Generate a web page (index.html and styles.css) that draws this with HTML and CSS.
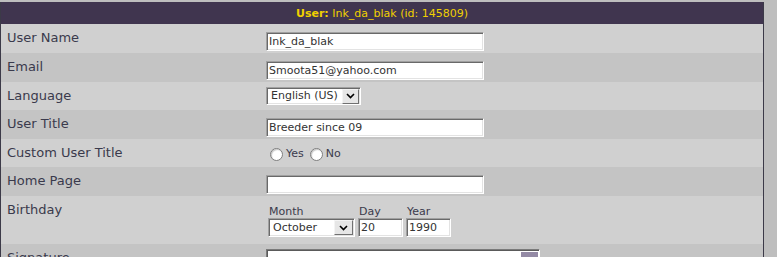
FILE: index.html
```html
<!DOCTYPE html>
<html>
<head>
<meta charset="utf-8">
<link rel="stylesheet" href="styles.css">
</head>
<body>
<div class="panel">
  <div class="head"><b>User:</b> Ink_da_blak (id: 145809)</div>

  <div class="row light h29">
    <div class="label">User Name</div>
    <div class="field"><input class="text wide" type="text" value="Ink_da_blak"></div>
  </div>

  <div class="row dark h29">
    <div class="label">Email</div>
    <div class="field"><input class="text wide" type="text" value="Smoota51@yahoo.com"></div>
  </div>

  <div class="row light h28">
    <div class="label">Language</div>
    <div class="field sel-field">
      <span class="select lang"><span class="sel-text">English (US)</span><span class="btn"><svg width="9" height="6" viewBox="0 0 9 6"><path d="M1 1 L4.5 4.5 L8 1" fill="none" stroke="#000" stroke-width="1.6"/></svg></span></span>
    </div>
  </div>

  <div class="row dark h29">
    <div class="label">User Title</div>
    <div class="field"><input class="text wide" type="text" value="Breeder since 09"></div>
  </div>

  <div class="row light h28">
    <div class="label">Custom User Title</div>
    <div class="field radios">
      <label class="radio"><span class="circle"></span>Yes</label>
      <label class="radio"><span class="circle"></span>No</label>
    </div>
  </div>

  <div class="row dark h29">
    <div class="label">Home Page</div>
    <div class="field"><input class="text wide" type="text" value=""></div>
  </div>

  <div class="row light h48">
    <div class="label">Birthday</div>
    <div class="field bday">
      <div class="part">
        <span class="small">Month</span>
        <span class="select month"><span class="sel-text">October</span><span class="btn"><svg width="9" height="6" viewBox="0 0 9 6"><path d="M1 1 L4.5 4.5 L8 1" fill="none" stroke="#000" stroke-width="1.6"/></svg></span></span>
      </div>
      <div class="part">
        <span class="small">Day</span>
        <input class="text day" type="text" value="20">
      </div>
      <div class="part">
        <span class="small">Year</span>
        <input class="text year" type="text" value="1990">
      </div>
    </div>
  </div>

  <div class="row dark last">
    <div class="label">Signature</div>
    <div class="field sig-field">
      <div class="textarea"><span class="sb"></span></div>
    </div>
  </div>
</div>
</body>
</html>
```

FILE: styles.css
```css
html, body {
  margin: 0;
  padding: 0;
  background: #bebebe;
  height: 257px;
  overflow: hidden;
}
body {
  padding-top: 2px;
  font-family: "DejaVu Sans", Verdana, sans-serif;
}
.panel {
  width: 762px;
  border-left: 1px solid #3c3a48;
  border-right: 1px solid #3c3a48;
  background: #d0d0d0;
}
.head {
  height: 22px;
  line-height: 23px;
  background: #40354f;
  color: #f0d000;
  font-size: 11px;
  text-align: center;
}
.head b { font-weight: bold; }

.row {
  display: grid;
  grid-template-columns: 265px 1fr;
  box-sizing: border-box;
}
.light { background: #d0d0d0; }
.dark { background: #c4c4c4; }
.h29 { height: 29px; }
.h28 { height: 28px; }
.h48 { height: 48px; }
.last { height: 40px; }

.label {
  padding: 6px 0 0 6px;
  font-size: 13px;
  line-height: 16px;
  color: #3a3a4c;
}
.field {
  padding-top: 6px;
}
.text {
  box-sizing: border-box;
  height: 19px;
  margin: 0;
  padding: 0 0 0 1px;
  font-family: "DejaVu Sans", Verdana, sans-serif;
  font-size: 11px;
  color: #333;
  background: #fff;
  border: 1px solid;
  border-color: #a0a0a0 #ffffff #ffffff #a0a0a0;
  box-shadow: inset 1px 1px 0 #696969, inset -1px -1px 0 #e3e3e3;
  outline: none;
  padding-left: 2px;
}
.wide { width: 218px; }

.sel-field { padding-top: 5px; }
.select {
  box-sizing: border-box;
  display: flex;
  align-items: center;
  height: 18px;
  background: #fff;
  border: 1px solid;
  border-color: #a0a0a0 #ffffff #ffffff #a0a0a0;
  box-shadow: inset 1px 1px 0 #696969, inset -1px -1px 0 #e3e3e3;
  font-size: 11px;
  color: #333;
  padding: 1px;
}
.lang { width: 95px; }
.sel-text {
  flex: 1;
  padding-left: 3px;
  white-space: nowrap;
  line-height: 14px;
}
.btn {
  box-sizing: border-box;
  width: 17px;
  height: 15px;
  display: flex;
  align-items: center;
  justify-content: center;
  background: #e6e6e6;
  border: 1px solid;
  border-color: #f4f4f4 #707070 #707070 #f4f4f4;
}

.radios {
  display: flex;
  align-items: center;
  gap: 6px;
  padding: 8px 0 0 4px;
  box-sizing: border-box;
  height: 28px;
  align-items: flex-start;
}
.radio {
  display: flex;
  align-items: center;
  font-size: 11px;
  color: #3a3a4c;
  line-height: 14px;
}
.circle {
  box-sizing: border-box;
  width: 13px;
  height: 13px;
  border-radius: 50%;
  border: 1px solid #7e7e7e;
  background: #fff;
  box-shadow: inset 1px 1px 1px #c8c8c8;
  margin-right: 3px;
}

.bday {
  display: flex;
  gap: 3px;
  padding: 9px 0 0 2px;
}
.part {
  display: flex;
  flex-direction: column;
}
.small {
  font-size: 11px;
  line-height: 13px;
  color: #3a3a4c;
  padding-left: 1px;
}
.month {
  width: 87px;
  height: 19px;
}
.month .sel-text { padding-left: 3px; }
.month .btn { width: 19px; height: 15px; }
.day { width: 45px; }
.year { width: 45px; }

.sig-field { padding-top: 5px; }
.textarea {
  box-sizing: border-box;
  width: 274px;
  height: 30px;
  background: #fff;
  border: 1px solid;
  border-color: #7a7a7a #ffffff #ffffff #7a7a7a;
  box-shadow: inset 1px 1px 0 #5a5a5a;
  display: flex;
  justify-content: flex-end;
  padding: 2px 1px 0 0;
}
.sb {
  width: 17px;
  height: 100%;
  background: #948aa5;
}
```
